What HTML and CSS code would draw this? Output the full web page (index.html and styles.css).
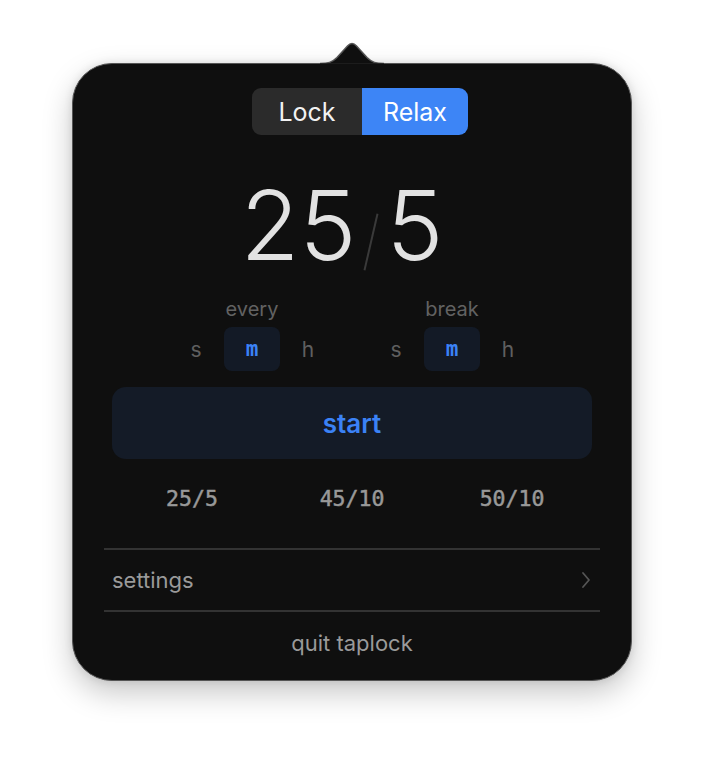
FILE: index.html
```html
<!DOCTYPE html>
<html>
<head>
<meta charset="utf-8">
<link rel="stylesheet" href="styles.css">
</head>
<body>
<div class="stage">
  <div class="panel">
    <svg class="arrow" width="64" height="26" viewBox="0 0 64 26">
      <path d="M0,22.5 C8,22.5 12,21.5 17,16.5 L27.5,5 Q32,0.2 36.5,5 L47,16.5 C52,21.5 56,22.5 64,22.5" fill="#0f0f0f" stroke="#555555" stroke-width="1.5"/>
      <rect x="0" y="22.4" width="64" height="4" fill="#0f0f0f"/>
    </svg>
    <div class="seg">
      <div class="seg-item seg-lock">Lock</div>
      <div class="seg-item seg-relax">Relax</div>
    </div>
    <div class="timer">
      <span class="num">25</span>
      <span class="slash"></span>
      <span class="num">5</span>
    </div>
    <div class="units">
      <div class="group">
        <div class="label">every</div>
        <div class="unit-row">
          <div class="unit">s</div>
          <div class="unit active">m</div>
          <div class="unit">h</div>
        </div>
      </div>
      <div class="group">
        <div class="label">break</div>
        <div class="unit-row">
          <div class="unit">s</div>
          <div class="unit active">m</div>
          <div class="unit">h</div>
        </div>
      </div>
    </div>
    <div class="start">start</div>
    <div class="presets">
      <div class="preset">25/5</div>
      <div class="preset">45/10</div>
      <div class="preset">50/10</div>
    </div>
    <div class="menu">
      <div class="menu-row settings">
        <span>settings</span>
        <svg class="chev" width="10" height="18" viewBox="0 0 10 18"><path d="M2,2 L8,9 L2,16" fill="none" stroke="#555" stroke-width="1.8" stroke-linecap="round" stroke-linejoin="round"/></svg>
      </div>
      <div class="menu-row quit">quit taplock</div>
    </div>
  </div>
</div>
</body>
</html>
```
FILE: styles.css
```css
html, body {
  margin: 0;
  padding: 0;
  background: #ffffff;
}
body {
  font-family: Inter, "Noto Sans", sans-serif;
  width: 704px;
  height: 760px;
  overflow: hidden;
}
.stage {
  padding-top: 63px;
  padding-left: 72px;
}
.panel {
  position: relative;
  width: 560px;
  height: 618px;
  box-sizing: border-box;
  border: 1.5px solid #555555;
  border-radius: 40px;
  background: #0f0f0f;
  box-shadow: 0 12px 30px rgba(0,0,0,0.22), 0 0 8px rgba(0,0,0,0.10);
  display: flex;
  flex-direction: column;
  align-items: center;
}
.arrow {
  position: absolute;
  top: -23.5px;
  left: 246.5px;
}
.seg {
  margin-top: 24px;
  margin-left: 16px;
  height: 47px;
  display: flex;
  border-radius: 9px;
  overflow: hidden;
}
.seg-item {
  height: 47px;
  display: flex;
  align-items: center;
  justify-content: center;
  font-size: 25px;
  color: #f2f2f2;
}
.seg-lock {
  width: 110px;
  background: #2b2b2b;
}
.seg-relax {
  width: 106px;
  background: #3d85f6;
  color: #ffffff;
}
.timer {
  margin-top: 42px;
  margin-right: 20px;
  height: 96px;
  display: flex;
  align-items: flex-start;
}
.num {
  font-size: 96px;
  line-height: 96px;
  font-weight: 300;
  color: #e2e2e2;
}
.slash {
  width: 2px;
  height: 58px;
  background: #3a3a3a;
  margin: 36px 14px 0 14px;
  transform: rotate(13deg);
}
.units {
  margin-top: 25px;
  display: flex;
  gap: 32px;
}
.group {
  display: flex;
  flex-direction: column;
  align-items: center;
  gap: 7px;
}
.label {
  height: 22px;
  line-height: 22px;
  font-size: 20px;
  color: #626262;
}
.unit-row {
  display: flex;
}
.unit {
  width: 56px;
  height: 44px;
  display: flex;
  align-items: center;
  justify-content: center;
  font-size: 21px;
  color: #5f5f5f;
}
.unit.active {
  background: #131a26;
  border-radius: 8px;
  color: #3b82f6;
  font-family: "DejaVu Sans Mono", "Liberation Mono", monospace;
  font-weight: bold;
  font-size: 21px;
}
.start {
  margin-top: 16px;
  width: 480px;
  height: 72px;
  border-radius: 14px;
  background: #141b27;
  display: flex;
  align-items: center;
  justify-content: center;
  font-size: 26px;
  font-weight: 600;
  color: #3b82f6;
}
.presets {
  width: 480px;
  height: 78px;
  display: grid;
  grid-template-columns: 1fr 1fr 1fr;
  align-items: center;
}
.preset {
  text-align: center;
  font-family: "DejaVu Sans Mono", "Liberation Mono", monospace;
  font-size: 21.5px;
  color: #999999;
  -webkit-text-stroke: 0.5px #999999;
  padding-top: 1px;
}
.menu {
  margin-top: 11px;
  width: 496px;
}
.menu-row {
  height: 60px;
  border-top: 2px solid #333333;
  display: flex;
  align-items: center;
  font-size: 22px;
  color: #9a9a9a;
}
.settings {
  justify-content: space-between;
  padding: 0 8px;
}
.chev {
  margin-right: 1px;
}
.quit {
  justify-content: center;
  height: 62px;
}
```
